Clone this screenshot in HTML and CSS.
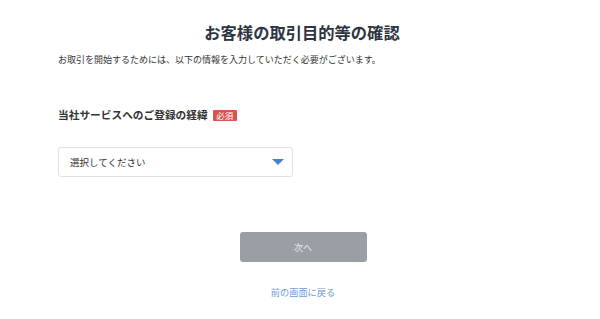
FILE: index.html
```html
<!doctype html>
<html>
	<head>
		<title>お客様の取引目的等の確認</title>
		<meta charset="utf-8" />
		<link rel="stylesheet" href="styles.css">
	</head>
	<body>
		<div class="page">
			<h1 class="title">お客様の取引目的等の確認</h1>
			<p class="lead">お取引を開始するためには、以下の情報を入力していただく必要がございます。</p>

			<div class="field">
				<div class="label">当社サービスへのご登録の経緯<span class="req">必須</span></div>
				<div class="select">
					<span>選択してください</span>
					<i class="arrow"></i>
				</div>
			</div>

			<div class="actions">
				<button class="next">次へ</button>
				<a class="back" href="#">前の画面に戻る</a>
			</div>
		</div>
	</body>
</html>
```

FILE: styles.css
```css
*{
	margin:0;
	padding:0;
	box-sizing:border-box;
}
body{
	background:#fff;
	color:#333;
	font-family:"Noto Sans CJK JP", "Noto Sans", sans-serif;
}
.page{
	width:484px;
	margin:0 auto 0 58px;
	padding-top:20px;
}
.title{
	font-size:16.3px;
	font-weight:bold;
	color:#2e3440;
	text-align:center;
	line-height:24px;
	margin-left:4px;
}
.lead{
	font-size:9px;
	line-height:14px;
	margin-top:9px;
	color:#333;
}

/* 入力欄 */
.field{
	margin-top:40px;
}
.label{
	font-size:10.7px;
	font-weight:bold;
	color:#333;
	line-height:16px;
	display:flex;
	align-items:center;
}
.req{
	display:inline-block;
	background:#d9534f;
	color:#fff;
	font-size:8.5px;
	font-weight:normal;
	line-height:11px;
	padding:0 3.5px;
	border-radius:1px;
	margin-left:5px;
}
.select{
	margin-top:24px;
	width:235px;
	height:30px;
	border:1px solid #dfe1e5;
	border-radius:3px;
	display:flex;
	align-items:center;
	justify-content:space-between;
	padding:0 8px 0 11px;
	font-size:9.5px;
	color:#333;
}
.arrow{
	width:0;
	height:0;
	border-left:6px solid transparent;
	border-right:6px solid transparent;
	border-top:6px solid #4a7fd0;
}

/* ボタン */
.actions{
	margin-top:55px;
	display:flex;
	flex-direction:column;
	align-items:center;
	padding-left:6px;
}
.next{
	width:127px;
	height:30px;
	background:#9a9fa5;
	border:none;
	border-radius:3px;
	color:#e8eaec;
	font-family:inherit;
	font-size:9px;
}
.back{
	margin-top:23px;
	font-size:9.2px;
	color:#6d9ad6;
	text-decoration:none;
	line-height:14px;
}
```
